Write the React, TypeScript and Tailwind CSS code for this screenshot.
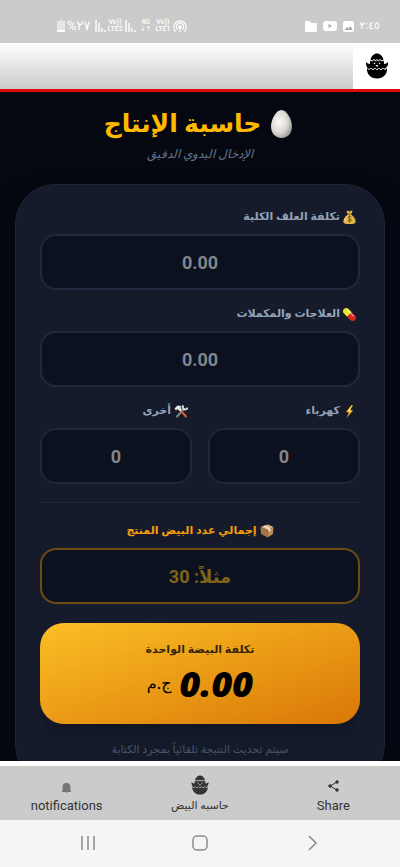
import { useState } from "react";
import type { ReactNode } from "react";

function ChickIcon({ className, line }: { className: string; line: string }) {
  return (
    <svg viewBox="0 0 44 52" className={className} aria-hidden="true">
      <path fill="currentColor" d="M22 1c6 0 11 5 13 12l-3 2-4-3-3 3-3-3-3 3-3-3-4 3-3-2C11 6 16 1 22 1z" />
      <path fill="currentColor" d="M9 15l3 2 4-3 3 3 3-3 3 3 3-3 4 3 3-2c1 2 1 5 1 7 3 0 6-2 8-4 1 6-2 11-6 13l-3 3-4-3-4 4-4-4-4 4-4-4-4 4-4-4-3 2C3 29-1 24 0 18c2 2 5 4 8 4 0-2 0-5 1-7z" />
      <path fill="currentColor" d="M2 30l3 3 5-3 4 4 4-4 4 4 4-4 4 4 4-4 4 3 4-3c1 12-7 21-20 21S1 42 2 30z" />
      <circle cx="17" cy="21" r="1.5" fill={line} />
      <circle cx="27" cy="21" r="1.5" fill={line} />
      <path fill={line} d="M19 24h6l-3 4z" />
      <path fill="none" stroke={line} strokeWidth="1.5" d="M3 31l3 2 4-3 4 4 4-4 4 4 4-4 4 4 4-4 4 3 3-2" />
    </svg>
  );
}

function Egg() {
  return (
    <svg viewBox="0 0 42 56" className="h-7 w-[21px]" aria-hidden="true">
      <defs>
        <radialGradient id="egg" cx="0.38" cy="0.42" r="0.65">
          <stop offset="0" stopColor="#fbfaf8" />
          <stop offset="0.6" stopColor="#dddad5" />
          <stop offset="1" stopColor="#9c9a97" />
        </radialGradient>
      </defs>
      <path fill="url(#egg)" d="M21 0c11 0 21 19 21 33 0 13-8 23-21 23S0 46 0 33C0 19 10 0 21 0z" />
    </svg>
  );
}

function MoneyBag() {
  return (
    <svg viewBox="0 0 26 28" className="h-[14px] w-[13px]" aria-hidden="true">
      <path fill="#dfb54c" d="M8 1l5 2 5-2 1 2-3 6c5 3 10 9 9 15 0 3-3 4-12 4S1 27 1 24C0 18 5 12 10 9L7 3z" />
      <path fill="#f6d77c" d="M9 11c-4 3-6 7-6 11l3-1c0-4 2-7 5-9z" />
      <path stroke="#8a5a16" strokeWidth="2" fill="none" d="M9 8h8M17 14c-2-2-7-2-7 1s7 2 7 5-6 3-8 1M13 11v14" />
    </svg>
  );
}

function Pill() {
  return (
    <svg viewBox="0 0 26 26" className="size-[13px]" aria-hidden="true">
      <g transform="rotate(45 13 13)">
        <path fill="#e9e32c" d="M13 6.500H4a6.500 6.500 0 0 0 0 13h9z" />
        <path fill="#d7261e" d="M13 6.500h9a6.500 6.500 0 0 1 0 13h-9z" />
        <path stroke="#fff" strokeOpacity="0.65" strokeWidth="2" strokeLinecap="round" d="M4 9.500h17" />
      </g>
    </svg>
  );
}

function Bolt() {
  return (
    <svg viewBox="0 0 26 26" className="size-[13px]" aria-hidden="true">
      <path fill="#fbb929" d="M17 0L6 14l6 1-5 11 13-15-6-1 6-9z" />
      <path fill="#ffe16b" d="M16 3l-7 10 4 1 2-5z" />
    </svg>
  );
}

function Tools() {
  return (
    <svg viewBox="0 0 28 26" className="h-[13px] w-[14px]" aria-hidden="true">
      <path stroke="#7f8488" strokeWidth="4" strokeLinecap="round" d="M6 23L20 8" />
      <path stroke="#d6d9dc" strokeWidth="4" fill="none" d="M19 1c-3 3-1 8 3 8 3 0 5-2 5-4" />
      <path stroke="#d8602b" strokeWidth="4" strokeLinecap="round" d="M14 12l10 11" />
      <path fill="#e6e8ea" d="M1 7l6-6 8 1-2 3 3 5-4 3-5-5-3 3z" />
    </svg>
  );
}

function Box() {
  return (
    <svg viewBox="0 0 28 28" className="size-[14px]" aria-hidden="true">
      <path fill="#dcb083" d="M1 6L16 1l11 5-12 6z" />
      <path fill="#a9744a" d="M1 6l14 6v15L2 20z" />
      <path fill="#c08a5b" d="M27 6l-12 6v15l11-7z" />
      <path fill="#efe0cc" d="M6 4l4-1 11 6v5l-4 1v-4z" />
    </svg>
  );
}

function Bars() {
  return (
    <svg viewBox="0 0 11 12" className="h-3 w-[11px]" fill="none" stroke="currentColor" strokeWidth="1.4" aria-hidden="true">
      <path d="M1 0v12M4 3v9M7 8v4M10 10v2" />
    </svg>
  );
}

function Stack({ top, bottom }: { top: string; bottom: string }) {
  return (
    <span className="flex flex-col items-center text-[7px] leading-[7px] font-medium">
      <span>{top}</span>
      <span>{bottom}</span>
    </span>
  );
}

function StatusBar() {
  return (
    <header className="flex h-[43px] shrink-0 items-center justify-between bg-[#cbcbcb] pt-[9px] pr-5 pl-[57px] text-white">
      <div className="flex items-center gap-[2px]">
        <svg viewBox="0 0 8 12" className="h-3 w-2" aria-hidden="true">
          <path fill="#e6e6e6" d="M2 0h4v1h2v9H0V1h2z" />
          <path fill="#fff" d="M0 10h8v2H0z" />
        </svg>
        <span className="pr-[2px] text-[13px]">%٢٧</span>
        <Bars />
        <Stack top="Vo))" bottom="LTE2" />
        <Bars />
        <span className="px-[2px]">
          <Stack top="4G" bottom="↓↑" />
        </span>
        <Stack top="Vo))" bottom="LTE1" />
        <svg viewBox="0 0 28 26" className="h-[13px] w-[14px]" fill="none" stroke="currentColor" strokeWidth="2.400" aria-hidden="true">
          <path d="M5 23a12.500 12.500 0 1 1 18 0M9 19a7.500 7.500 0 1 1 10 0" />
          <circle cx="14" cy="14" r="2.500" fill="currentColor" />
          <path d="M14 15v9" />
        </svg>
      </div>
      <div className="flex items-center gap-[6px]">
        <svg viewBox="0 0 12 11" className="h-[11px] w-3" fill="currentColor" aria-hidden="true">
          <path d="M1 0h4l1 2h5a1 1 0 0 1 1 1v7a1 1 0 0 1-1 1H1a1 1 0 0 1-1-1V1a1 1 0 0 1 1-1z" />
        </svg>
        <svg viewBox="0 0 14 10" className="h-[10px] w-[14px]" aria-hidden="true">
          <rect width="14" height="10" rx="3" fill="#fff" />
          <path fill="#aaa" d="M5.500 3v4L9 5z" />
        </svg>
        <svg viewBox="0 0 11 11" className="size-[11px]" aria-hidden="true">
          <rect width="11" height="11" rx="2" fill="#fff" />
          <path fill="#aaa" d="M1.500 9l2.500-3 1.500 1.500L7.500 5l2 4z" />
        </svg>
        <span className="text-[11px]">٢:٤٥</span>
      </div>
    </header>
  );
}

type FieldProps = {
  id: string;
  label: string;
  icon: ReactNode;
  placeholder: string;
  value: string;
  onChange: (value: string) => void;
  highlight?: boolean;
};

function Field({ id, label, icon, placeholder, value, onChange, highlight = false }: FieldProps) {
  return (
    <div className="flex min-w-0 flex-col gap-[9px]">
      <label
        htmlFor={id}
        className={
          highlight
            ? "flex h-4 items-center justify-center gap-[3px] text-[11px] font-bold whitespace-nowrap text-[#f59e0b]"
            : "flex h-4 items-center gap-[3px] px-1 text-[11px] font-bold whitespace-nowrap text-[#94a3b8]"
        }
      >
        {icon}
        {label}
      </label>
      <input
        id={id}
        inputMode="decimal"
        placeholder={placeholder}
        value={value}
        onChange={(e) => onChange(e.target.value)}
        className={
          highlight
            ? "h-14 w-full rounded-2xl border-2 border-[#704b14] bg-[#0b111e] text-center text-lg font-bold text-[#fbbf24] outline-none placeholder:text-[#80641a]"
            : "h-14 w-full rounded-2xl border-2 border-[#1e293f] bg-[#0b111e] text-center text-lg font-bold text-white outline-none placeholder:text-[#82858b]"
        }
      />
    </div>
  );
}

export default function App() {
  const [feed, setFeed] = useState("");
  const [medicine, setMedicine] = useState("");
  const [power, setPower] = useState("");
  const [other, setOther] = useState("");
  const [eggs, setEggs] = useState("");

  const total = [feed, medicine, power, other].reduce((sum, v) => sum + (Number(v) || 0), 0);
  const count = Number(eggs) || 0;
  const cost = count > 0 ? total / count : 0;

  return (
    <div className="flex h-screen flex-col bg-[#050811] font-[Roboto,'DejaVu_Sans',sans-serif]">
      <StatusBar />
      <div className="flex h-[49px] shrink-0 justify-end border-b-[3px] border-[#e00a0a] bg-linear-to-b from-white to-[#cbcbcb]">
        <div className="flex w-[47px] items-center justify-center bg-white text-black">
          <ChickIcon className="h-[26px] w-[22px]" line="#fff" />
        </div>
      </div>

      <main dir="rtl" className="min-h-0 flex-1 overflow-y-auto px-[15px] pt-4 [scrollbar-width:none]">
        <h1 className="flex h-8 items-center justify-center gap-[10px] pr-1 text-[25px] font-bold text-[#ffb800]">
          <Egg />
          حاسبة الإنتاج
        </h1>
        <p className="mt-1 text-center text-xs leading-5 font-medium text-[#64748b] italic">الإدخال اليدوي الدقيق</p>

        <section className="mt-5 rounded-[40px] border border-[#1e2536] bg-[#151b2b] p-6 shadow-2xl">
          <div className="flex flex-col gap-4">
            <Field id="feed" label="تكلفة العلف الكلية" icon={<MoneyBag />} placeholder="0.00" value={feed} onChange={setFeed} />
            <Field id="medicine" label="العلاجات والمكملات" icon={<Pill />} placeholder="0.00" value={medicine} onChange={setMedicine} />
            <div className="grid grid-cols-2 gap-4">
              <Field id="power" label="كهرباء" icon={<Bolt />} placeholder="0" value={power} onChange={setPower} />
              <Field id="other" label="أخرى" icon={<Tools />} placeholder="0" value={other} onChange={setOther} />
            </div>
          </div>
          <div className="mt-[18px] border-t border-[#1e2536] pt-5">
            <Field id="eggs" label="إجمالي عدد البيض المنتج" icon={<Box />} placeholder="مثلاً: 30" value={eggs} onChange={setEggs} highlight />
          </div>
          <div className="mt-[19px] flex flex-col items-center rounded-3xl bg-linear-to-br from-[#fbbf24] to-[#d97706] pt-[17px] pb-5 text-black shadow-xl">
            <p className="text-[11px] leading-5 font-bold text-black/80">تكلفة البيضة الواحدة</p>
            <output htmlFor="feed medicine power other eggs" className="mt-1 flex h-10 items-center gap-2">
              <span className="font-['Open_Sans',sans-serif] text-4xl font-extrabold italic">{cost.toFixed(2)}</span>
              <span className="text-base font-medium">ج.م</span>
            </output>
          </div>
          <p className="mt-4 text-center text-[11px] leading-5 text-[#475569]">سيتم تحديث النتيجة تلقائياً بمجرد الكتابة</p>
        </section>
      </main>

      <nav className="grid h-[59px] shrink-0 grid-cols-3 border-t-[5px] border-white bg-[#cbcbcb] text-[13px] text-[#333]">
        <button type="button" className="flex flex-col items-center justify-end pb-[5px]">
          <svg viewBox="0 0 18 20" className="mb-1 h-[10px] w-[9px]" fill="#757575" aria-hidden="true">
            <path d="M9 0c6 0 8 4 8 9v5l1 3v1H0v-1l1-3V9c0-5 2-9 8-9zM7 18h4l-2 2z" />
          </svg>
          <span className="leading-[18px]">notifications</span>
        </button>
        <button type="button" className="flex flex-col items-center justify-end pb-[5px]">
          <ChickIcon className="mb-[2px] h-5 w-[18px]" line="#cbcbcb" />
          <span className="text-[11px] leading-[18px]">حاسبه البيض</span>
        </button>
        <button type="button" className="flex flex-col items-center justify-end pb-[5px]">
          <svg viewBox="0 0 22 24" className="mb-[5px] h-3 w-[11px]" fill="#333" stroke="#333" strokeWidth="2" aria-hidden="true">
            <path fill="none" d="M18 4L4 12l14 8" />
            <circle cx="18" cy="4" r="2.500" />
            <circle cx="4" cy="12" r="2.500" />
            <circle cx="18" cy="20" r="2.500" />
          </svg>
          <span className="leading-[18px]">Share</span>
        </button>
      </nav>

      <div className="flex h-[47px] shrink-0 items-center justify-center gap-24 bg-[#f5f5f5] pb-[2px] text-[#8a8a8a]">
        <button type="button" aria-label="Recent apps">
          <svg viewBox="0 0 16 16" className="size-4" fill="none" stroke="currentColor" strokeWidth="1.500" aria-hidden="true">
            <path d="M2 1v14M8 1v14M14 1v14" />
          </svg>
        </button>
        <button type="button" aria-label="Home">
          <svg viewBox="0 0 16 16" className="size-4" fill="none" stroke="currentColor" strokeWidth="1.500" aria-hidden="true">
            <rect x="1" y="1" width="14" height="14" rx="4" />
          </svg>
        </button>
        <button type="button" aria-label="Back">
          <svg viewBox="0 0 16 16" className="size-4" fill="none" stroke="currentColor" strokeWidth="1.500" aria-hidden="true">
            <path d="M5 1l7 7-7 7" />
          </svg>
        </button>
      </div>
    </div>
  );
}
